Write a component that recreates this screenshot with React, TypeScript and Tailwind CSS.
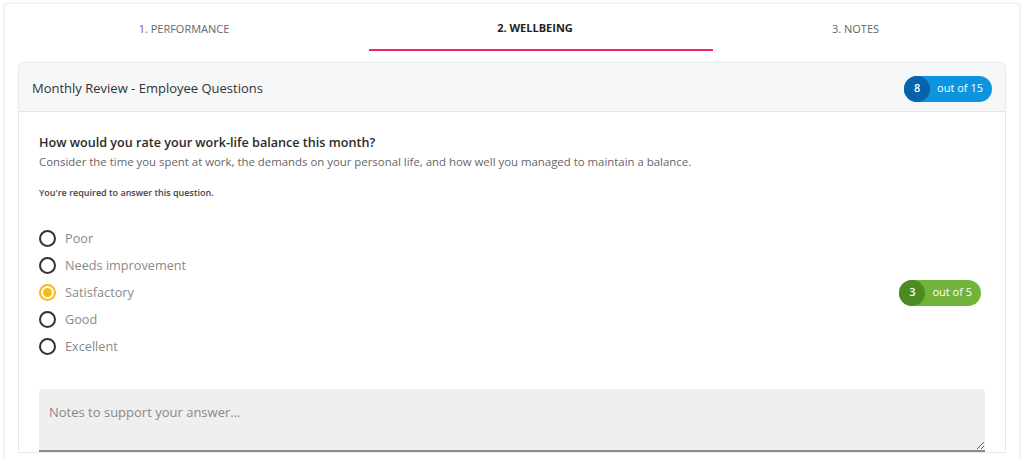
import { useState } from 'react';

const options = ['Poor', 'Needs improvement', 'Satisfactory', 'Good', 'Excellent'];

const Badge = ({ n, total, dark, light }: { n: number; total: number; dark: string; light: string }) => (
    <div className={`flex h-[26px] items-center rounded-full ${light} text-[11px] text-white`}>
        <span className={`flex h-[26px] w-[26px] items-center justify-center rounded-full ${dark} font-semibold`}>
            {n}
        </span>
        <span className="pl-[7px] pr-[9px]">out of {total}</span>
    </div>
);

const App = () => {
    const [selected, setSelected] = useState('Satisfactory');

    return (
        <div className="h-[460px] overflow-hidden bg-white pt-[3px] px-[4px] font-['Segoe_UI','Open_Sans',sans-serif]">
            <div className="h-[470px] rounded-sm border border-[#eeeeee] bg-white px-[13px] shadow-[0_0_4px_rgba(0,0,0,0.06)]">
                <div className="flex h-[47px] text-[11px] uppercase">
                    <div className="flex w-[351px] items-center justify-center pt-[4px] pr-[19px] text-[#666]">
                        1. Performance
                    </div>
                    <div className="flex w-[344px] items-center justify-center border-b-2 border-[#f0246e] pt-[4px] pr-[12px] font-bold text-[#222]">
                        2. Wellbeing
                    </div>
                    <div className="flex flex-1 items-center justify-center pt-[4px] pr-[8px] text-[#666]">3. Notes</div>
                </div>

                <div className="mt-[11px] rounded-t border border-[#e6e8eb] bg-white">
                    <div className="flex h-[49px] items-center justify-between border-b border-[#e3e5e8] bg-[#f6f7f9] pt-[3px] pl-[13px] pr-[13px]">
                        <span className="text-[13px] text-[#333]">Monthly Review - Employee Questions</span>
                        <Badge n={8} total={15} dark="bg-[#0662a9]" light="bg-[#0b95e0]" />
                    </div>

                    <div className="px-[20px] pt-[22px]">
                        <h3 className="text-[12.6px] font-semibold text-[#2b2b2b]">
                            How would you rate your work-life balance this month?
                        </h3>
                        <p className="text-[11.4px] text-[#666]">
                            Consider the time you spent at work, the demands on your personal life, and how well you managed to maintain a balance.
                        </p>
                        <p className="mt-[16px] text-[9px] font-semibold text-[#444]">
                            You're required to answer this question.
                        </p>

                        <div className="mt-[30px] flex items-center justify-between">
                            <div className="flex flex-col gap-[9px]">
                                {options.map((o) => {
                                    const on = o === selected;
                                    return (
                                        <button
                                            key={o}
                                            onClick={() => setSelected(o)}
                                            className="flex h-[18px] items-center gap-[9px] text-left"
                                        >
                                            <span
                                                className={`flex h-[17px] w-[17px] items-center justify-center rounded-full border-2 ${
                                                    on ? 'border-[#f9b91c]' : 'border-[#333]'
                                                }`}
                                            >
                                                {on && <span className="h-[9px] w-[9px] rounded-full bg-[#f9b91c]" />}
                                            </span>
                                            <span className="text-[12.7px] text-[#8a8a8a]">{o}</span>
                                        </button>
                                    );
                                })}
                            </div>
                            <div className="mr-[4px]">
                                <Badge n={3} total={5} dark="bg-[#4b8b22]" light="bg-[#72b33b]" />
                            </div>
                        </div>

                        <textarea
                            placeholder="Notes to support your answer..."
                            className="mt-[33px] block h-[63px] w-full rounded-t-sm border-b-2 border-[#8c8c8c] bg-[#efefef] px-[10px] py-[14px] text-[13px] text-[#333] outline-none placeholder:text-[#888]"
                        />
                    </div>
                </div>
            </div>
        </div>
    );
};

export default App;
